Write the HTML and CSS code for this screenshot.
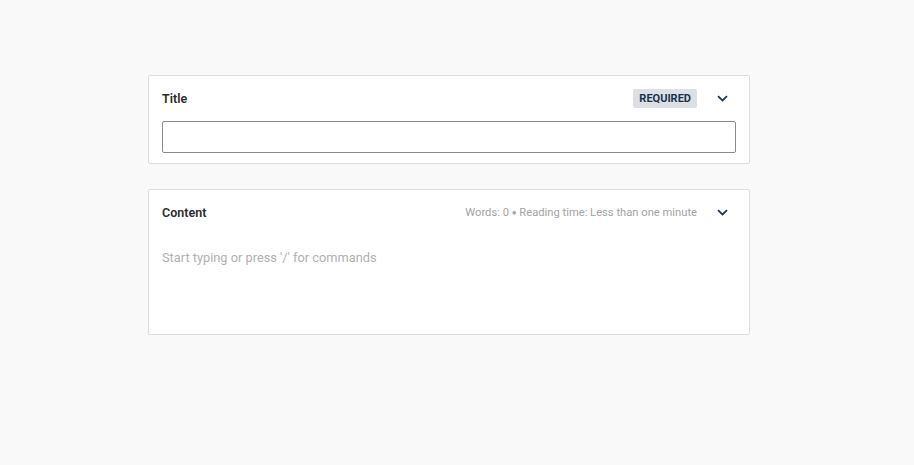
FILE: index.html
```html
<!DOCTYPE html>
<html lang="en">
<head>
    <meta charset="UTF-8">
    <title>Editor</title>
    <link rel="stylesheet" href="styles.css">
</head>
<body>
    <div class="editor">
        <section class="field-card">
            <div class="field-header">
                <span class="field-label">Title</span>
                <div class="field-meta">
                    <span class="badge">REQUIRED</span>
                    <button class="toggle-btn" aria-label="Collapse">
                        <svg width="11" height="7" viewBox="0 0 11 7"><path d="M1 1.2 L5.5 5.5 L10 1.2" fill="none" stroke="#1b3a55" stroke-width="1.8"/></svg>
                    </button>
                </div>
            </div>
            <input type="text" class="title-input">
        </section>

        <section class="field-card content-card">
            <div class="field-header">
                <span class="field-label">Content</span>
                <div class="field-meta">
                    <span class="stats">Words: 0 <span class="dot">●</span> Reading time: Less than one minute</span>
                    <button class="toggle-btn" aria-label="Collapse">
                        <svg width="11" height="7" viewBox="0 0 11 7"><path d="M1 1.2 L5.5 5.5 L10 1.2" fill="none" stroke="#1b3a55" stroke-width="1.8"/></svg>
                    </button>
                </div>
            </div>
            <div class="content-body">Start typing or press '/' for commands</div>
        </section>
    </div>
</body>
</html>
```

FILE: styles.css
```css
/* Global Styles */
* {
    margin: 0;
    padding: 0;
    box-sizing: border-box;
    font-family: Roboto, 'Liberation Sans', sans-serif;
}

body {
    background-color: #f9f9f9;
    height: 465px;
}

/* Editor column */
.editor {
    width: 602px;
    margin-left: 148px;
    padding-top: 75px;
    display: flex;
    flex-direction: column;
    gap: 25px;
}

.field-card {
    background-color: white;
    border: 1px solid #dcdcdc;
    border-radius: 2px;
    padding: 12px 13px 10px 13px;
}

.field-header {
    display: flex;
    justify-content: space-between;
    align-items: center;
    height: 21px;
}

.field-label {
    font-size: 12.5px;
    font-weight: 600;
    color: #2b2b2b;
}

.field-meta {
    display: flex;
    align-items: center;
}

.badge {
    background-color: #dce0e4;
    color: #17344f;
    font-size: 11px;
    font-weight: 700;
    padding: 0 6px;
    height: 19px;
    line-height: 19px;
    border-radius: 2px;
    margin-right: 19px;
}

.stats {
    font-size: 11.2px;
    color: #a3a3a3;
    margin-right: 19px;
}

.dot {
    font-size: 8px;
    vertical-align: 1px;
}

.toggle-btn {
    background: none;
    border: none;
    width: 12px;
    height: 12px;
    display: flex;
    align-items: center;
    justify-content: center;
    margin-right: 8px;
    cursor: pointer;
}

.title-input {
    margin-top: 12px;
    width: 100%;
    height: 32px;
    border: 1px solid #8a8a8a;
    border-radius: 2px;
}

/* Content editor */
.content-card {
    height: 146px;
}

.content-body {
    margin-top: 27px;
    font-size: 12.8px;
    color: #b0b0b0;
}
```
